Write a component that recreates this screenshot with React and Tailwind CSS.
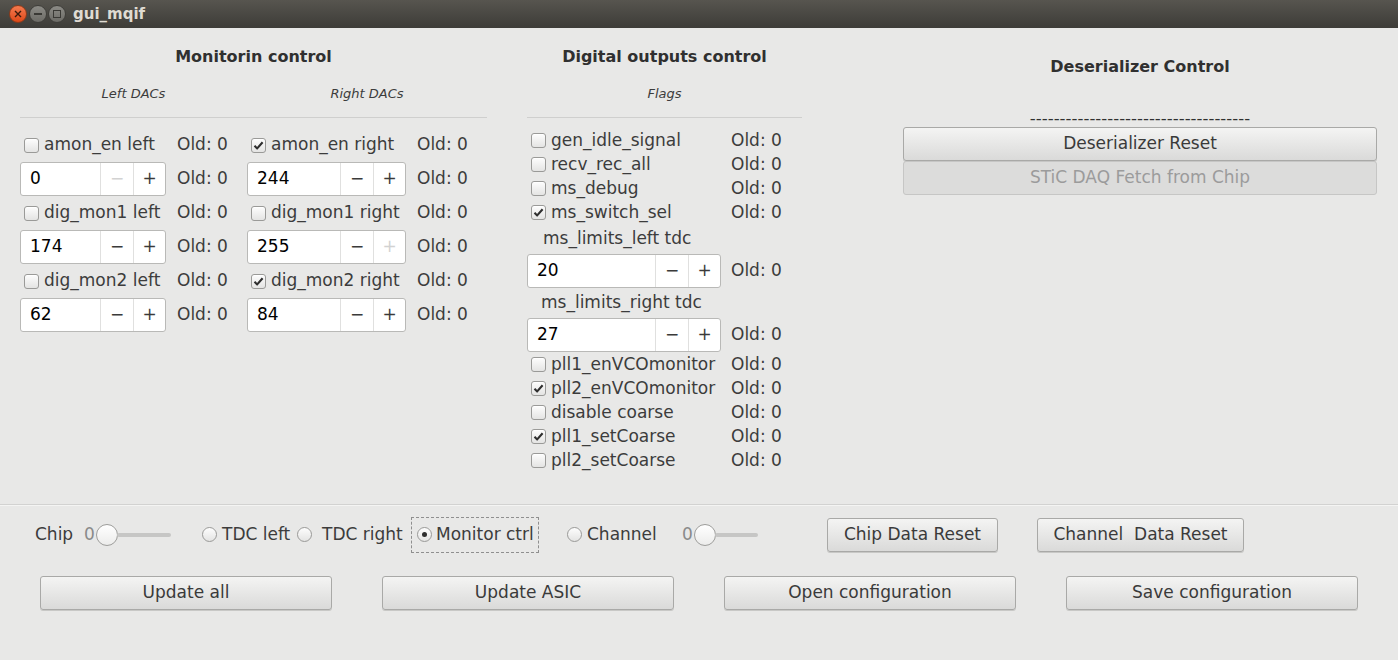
import React from "react";

const font = { fontFamily: '"DejaVu Sans", "Liberation Sans", sans-serif' };

function Check({ checked, label }) {
  return (
    <div className="flex items-center h-full pl-1">
      <span className="relative w-[15px] h-[15px] rounded-[3px] border border-[#9a9a98] bg-gradient-to-b from-[#fdfdfd] to-[#e4e4e3] shadow-[inset_0_1px_0_#fff] flex items-center justify-center">
        {checked && (
          <svg width="11" height="11" viewBox="0 0 11 11">
            <path d="M1.5 5.8 L4.2 8.4 L9.6 2.2" fill="none" stroke="#2e2e2e" strokeWidth="2.1" strokeLinejoin="round" />
          </svg>
        )}
      </span>
      <span className="ml-[5px] whitespace-nowrap">{label}</span>
    </div>
  );
}

function Spin({ value, w, field, minusOff, plusOff }) {
  return (
    <div
      className="flex h-[34px] bg-white border border-[#b9b9b7] rounded-[3px] text-black"
      style={{ width: w }}
    >
      <div className="flex items-center pl-[9px]" style={{ width: field }}>
        {value}
      </div>
      <div className={`w-[33px] flex items-center justify-center border-l border-[#e0e0df] ${minusOff ? "text-[#d2d2d2]" : "text-[#3a3a3a]"}`}>
        −
      </div>
      <div className={`flex-1 flex items-center justify-center border-l border-[#e0e0df] ${plusOff ? "text-[#d2d2d2]" : "text-[#3a3a3a]"}`}>
        +
      </div>
    </div>
  );
}

function Radio({ checked }) {
  return (
    <span className="w-[15px] h-[15px] rounded-full border border-[#9a9a98] bg-gradient-to-b from-[#fdfdfd] to-[#e4e4e3] flex items-center justify-center shrink-0">
      {checked && <span className="w-[5px] h-[5px] rounded-full bg-[#2e2e2e]" />}
    </span>
  );
}

function Slider({ groove }) {
  return (
    <div className="flex items-center">
      <span className="text-[#8a8a8a] w-[12px]">0</span>
      <span className="w-[22px] h-[22px] rounded-full border border-[#9d9d9b] bg-gradient-to-b from-[#ffffff] to-[#ececeb] shrink-0" />
      <span className="h-[4px] rounded-full bg-[#c6c6c5] -ml-[1px]" style={{ width: groove }} />
    </div>
  );
}

function Btn({ children, className = "", disabled }) {
  return (
    <div
      className={`flex items-center justify-center rounded-[3px] border ${
        disabled
          ? "border-[#c6c6c5] bg-[#dcdcdb] text-[#9b9b9b]"
          : "border-[#a9a9a7] bg-gradient-to-b from-[#f4f4f3] to-[#dadad9] text-[#3a3a3a] shadow-[0_1px_0_#c8c8c6]"
      } ${className}`}
    >
      {children}
    </div>
  );
}

const leftRows = [
  { l: ["amon_en left", false], r: ["amon_en right", true] },
  { l: ["0", "minusOff"], r: ["244"] },
  { l: ["dig_mon1 left", false], r: ["dig_mon1 right", false] },
  { l: ["174"], r: ["255", "plusOff"] },
  { l: ["dig_mon2 left", false], r: ["dig_mon2 right", true] },
  { l: ["62"], r: ["84"] },
];

const flagsA = [
  ["gen_idle_signal", false],
  ["recv_rec_all", false],
  ["ms_debug", false],
  ["ms_switch_sel", true],
];
const flagsB = [
  ["pll1_enVCOmonitor", false],
  ["pll2_enVCOmonitor", true],
  ["disable coarse", false],
  ["pll1_setCoarse", true],
  ["pll2_setCoarse", false],
];

export default function App() {
  return (
    <div className="w-[1398px] h-[660px] bg-[#e8e8e7] text-[#3c3c3c] text-[17px] overflow-hidden flex flex-col" style={font}>
      {/* title bar */}
      <div className="h-[28px] shrink-0 bg-gradient-to-b from-[#57554f] to-[#3d3c38] flex items-center">
        <div className="flex items-center ml-[9px]">
          <span className="w-[18px] h-[18px] rounded-full bg-gradient-to-b from-[#f47a4e] to-[#dd4714] border border-[#8e3a1a] flex items-center justify-center">
            <svg width="8" height="8" viewBox="0 0 8 8"><path d="M1 1 L7 7 M7 1 L1 7" stroke="#3a1a0c" strokeWidth="1.4" /></svg>
          </span>
          <span className="ml-[2px] w-[18px] h-[18px] rounded-full bg-gradient-to-b from-[#8c8b86] to-[#6c6b66] border border-[#3f3e3a] flex items-center justify-center">
            <span className="w-[8px] h-[2px] bg-[#3a3935]" />
          </span>
          <span className="ml-[1px] w-[18px] h-[18px] rounded-full bg-gradient-to-b from-[#8c8b86] to-[#6c6b66] border border-[#3f3e3a] flex items-center justify-center">
            <span className="w-[8px] h-[8px] border-[1.5px] border-[#3a3935]" />
          </span>
        </div>
        <span className="ml-[7px] text-[15px] font-bold text-[#dfdbd2]">gui_mqif</span>
      </div>

      {/* main area */}
      <div className="h-[476px] shrink-0 flex">
        {/* Monitoring */}
        <div className="ml-[20px] w-[467px]">
          <div className="h-[58px] flex items-center justify-center text-[16px] font-bold text-[#303030]">Monitorin control</div>
          <div className="flex h-[16px] items-center text-[13px] italic text-[#3c3c3c]">
            <span className="w-[227px] text-center">Left DACs</span>
            <span className="w-[240px] text-center">Right DACs</span>
          </div>
          <div className="mt-[15px] h-[1px] bg-[#cfcfce]" />
          <div className="mt-[10px] grid grid-cols-[157px_70px_170px_70px] auto-rows-[34px]">
            {leftRows.map((row, i) =>
              i % 2 === 0 ? (
                <React.Fragment key={i}>
                  <Check label={row.l[0]} checked={row.l[1]} />
                  <div className="flex items-center">Old: 0</div>
                  <Check label={row.r[0]} checked={row.r[1]} />
                  <div className="flex items-center">Old: 0</div>
                </React.Fragment>
              ) : (
                <React.Fragment key={i}>
                  <div className="flex items-center">
                    <Spin value={row.l[0]} w={146} field={79} minusOff={row.l[1] === "minusOff"} />
                  </div>
                  <div className="flex items-center">Old: 0</div>
                  <div className="flex items-center">
                    <Spin value={row.r[0]} w={159} field={92} plusOff={row.r[1] === "plusOff"} />
                  </div>
                  <div className="flex items-center">Old: 0</div>
                </React.Fragment>
              )
            )}
          </div>
        </div>

        {/* Digital outputs */}
        <div className="ml-[40px] w-[275px]">
          <div className="h-[58px] flex items-center justify-center text-[16px] font-bold text-[#303030]">Digital outputs control</div>
          <div className="h-[16px] flex items-center justify-center text-[13px] italic">Flags</div>
          <div className="mt-[15px] h-[1px] bg-[#cfcfce]" />
          <div className="mt-[10px]">
            {flagsA.map(([l, c]) => (
              <div key={l} className="h-[24px] grid grid-cols-[204px_1fr]">
                <Check label={l} checked={c} />
                <div className="flex items-center">Old: 0</div>
              </div>
            ))}
            <div className="h-[30px] flex items-center pl-[16px]">ms_limits_left tdc</div>
            <div className="h-[34px] grid grid-cols-[204px_1fr]">
              <Spin value="20" w={194} field={127} />
              <div className="flex items-center">Old: 0</div>
            </div>
            <div className="h-[30px] flex items-center pl-[14px]">ms_limits_right tdc</div>
            <div className="h-[34px] grid grid-cols-[204px_1fr]">
              <Spin value="27" w={194} field={127} />
              <div className="flex items-center">Old: 0</div>
            </div>
            {flagsB.map(([l, c]) => (
              <div key={l} className="h-[24px] grid grid-cols-[204px_1fr]">
                <Check label={l} checked={c} />
                <div className="flex items-center">Old: 0</div>
              </div>
            ))}
          </div>
        </div>

        {/* Deserializer */}
        <div className="ml-[101px] w-[474px]">
          <div className="h-[78px] flex items-center justify-center text-[16px] font-bold text-[#303030]">Deserializer Control</div>
          <div className="h-[21px] flex items-end justify-center text-[#303030] leading-none text-[16.5px]">
            -------------------------------------
          </div>
          <Btn className="h-[34px]">Deserializer Reset</Btn>
          <Btn className="h-[34px]" disabled>STiC DAQ Fetch from Chip</Btn>
        </div>
      </div>

      <div className="h-[1px] bg-[#d2d2d1] shrink-0" />
      <div className="h-[1px] bg-[#f4f4f3] shrink-0" />

      {/* bottom row 1 */}
      <div className="mt-[10px] h-[37px] flex items-center">
        <span className="ml-[35px] w-[49px]">Chip</span>
        <Slider groove={54} />
        <div className="ml-[31px] flex items-center w-[95px]">
          <Radio />
          <span className="ml-[5px]">TDC left</span>
        </div>
        <div className="flex items-center w-[114px]">
          <Radio />
          <span className="ml-[10px]">TDC right</span>
        </div>
        <div className="flex items-center h-[36px] w-[128px] border border-dashed border-[#8f8f8f] pl-[5px]">
          <Radio checked />
          <span className="ml-[4px]">Monitor ctrl</span>
        </div>
        <div className="ml-[28px] flex items-center w-[115px]">
          <Radio />
          <span className="ml-[5px]">Channel</span>
        </div>
        <Slider groove={43} />
        <Btn className="ml-[69px] w-[171px] h-[34px]">Chip Data Reset</Btn>
        <Btn className="ml-[39px] w-[207px] h-[34px] whitespace-pre">Channel  Data Reset</Btn>
      </div>

      {/* bottom row 2 */}
      <div className="mt-[23px] flex gap-[50px] pl-[40px]">
        <Btn className="w-[292px] h-[34px]">Update all</Btn>
        <Btn className="w-[292px] h-[34px]">Update ASIC</Btn>
        <Btn className="w-[292px] h-[34px]">Open configuration</Btn>
        <Btn className="w-[292px] h-[34px]">Save configuration</Btn>
      </div>
    </div>
  );
}
